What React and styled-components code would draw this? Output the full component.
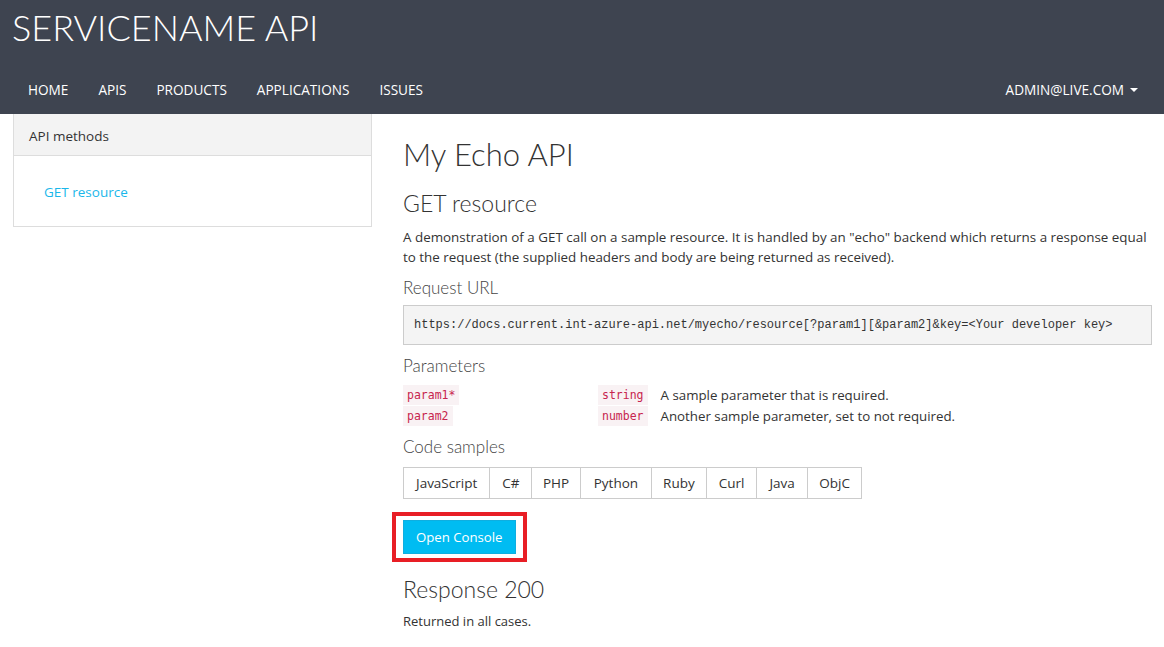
import React from "react";
import styled, { createGlobalStyle } from "styled-components";

const GlobalStyle = createGlobalStyle`
  body {
    margin: 0;
    background: #fff;
    font-family: "Open Sans", "Noto Sans", sans-serif;
    color: #333;
  }
`;

const lightFont = `"Lato", "Open Sans", sans-serif`;

const Header = styled.header`
  background-color: #3e4450;
  color: #fff;
`;

const Brand = styled.div`
  padding: 0 12px;
  height: 65px;
  font-family: ${lightFont};
  font-size: 36px;
  font-weight: 300;
  line-height: 54px;
`;

const NavBar = styled.nav`
  display: flex;
  justify-content: space-between;
  align-items: center;
  height: 49px;
  padding: 0 13px;
`;

const NavList = styled.div`
  display: flex;
`;

const NavItem = styled.a`
  padding: 0 15px;
  font-size: 13.6px;
  color: #fff;
  text-transform: uppercase;
  text-decoration: none;
`;

const UserMenu = styled(NavItem)`
  display: flex;
  align-items: center;
  gap: 6px;
  padding-right: 13px;
  &::after {
    content: "";
    border-left: 4px solid transparent;
    border-right: 4px solid transparent;
    border-top: 4px solid #fff;
  }
`;

const Page = styled.div`
  display: grid;
  grid-template-columns: 359px 1fr;
  gap: 31px;
  padding: 0 12px 0 13px;
`;

const Panel = styled.aside`
  align-self: start;
  border: 1px solid #ddd;
  border-top: none;
`;

const PanelHeading = styled.div`
  background: #f3f3f3;
  border-bottom: 1px solid #ddd;
  padding: 3px 15px 0;
  height: 38px;
  line-height: 38px;
  font-size: 13.5px;
  color: #333;
`;

const PanelBody = styled.div`
  padding: 24px 30px 24px;
`;

const MethodLink = styled.a`
  color: #1ab7ea;
  font-size: 13.5px;
  text-decoration: none;
  line-height: 20px;
`;

const Main = styled.main`
  padding-top: 18px;
`;

const Title = styled.h1`
  margin: 0 0 11px;
  font-family: ${lightFont};
  font-size: 31px;
  font-weight: 300;
  line-height: 44px;
  color: #333;
`;

const OpTitle = styled.h2`
  margin: 0 0 8px;
  font-family: ${lightFont};
  font-size: 23px;
  font-weight: 300;
  line-height: 32px;
  color: #333;
`;

const SubTitle = styled.h3`
  margin: 0 0 4px;
  font-family: ${lightFont};
  font-size: 17px;
  font-weight: 300;
  line-height: 26px;
  color: #444;
`;

const Text = styled.p`
  margin: 0 0 8px;
  font-size: ${(p) => p.size || 13.4}px;
  line-height: 20px;
  color: #333;
`;

const UrlBox = styled.pre`
  margin: 0 0 8px;
  padding: 11px 10px;
  background: #f4f4f4;
  border: 1px solid #ccc;
  font-family: "Liberation Mono", "DejaVu Sans Mono", monospace;
  font-size: 12px;
  line-height: 16px;
  color: #333;
  white-space: pre;
`;

const ParamGrid = styled.div`
  display: grid;
  grid-template-columns: 182px max-content 1fr;
  column-gap: 13px;
  row-gap: 1px;
  align-items: center;
  margin: 6px 0 8px;
`;

const Code = styled.code`
  justify-self: start;
  padding: 1px 4px;
  background: #f9f2f4;
  color: #c7254e;
  font-family: "DejaVu Sans Mono", "Liberation Mono", monospace;
  font-size: 11.5px;
  line-height: 18px;
`;

const ParamDesc = styled.span`
  font-size: 13.3px;
  color: #333;
  line-height: 20px;
`;

const Tabs = styled.div`
  display: flex;
  margin: 7px 0 13px;
`;

const Tab = styled.div`
  padding: 0 ${(p) => p.pad || 12}px;
  height: 30px;
  line-height: 30px;
  border: 1px solid #ccc;
  margin-left: -1px;
  font-size: 13.5px;
  color: #333;
  &:first-child {
    margin-left: 0;
  }
`;

const Highlight = styled.div`
  display: inline-block;
  margin-left: -11px;
  padding: 4px 7px;
  border: 4px solid #e81e25;
`;

const ConsoleButton = styled.button`
  display: block;
  height: 34px;
  padding: 0 12px;
  background: #00bcf2;
  border: 1px solid #0faee0;
  color: #fff;
  font-family: "Open Sans", "Noto Sans", sans-serif;
  font-size: 13.2px;
`;

const ResponseTitle = styled(OpTitle)`
  margin-top: 11px;
  margin-bottom: 6px;
`;

const tabs = [
  ["JavaScript", 12],
  ["C#", 12],
  ["PHP", 10.5],
  ["Python", 13],
  ["Ruby", 11],
  ["Curl", 12],
  ["Java", 12],
  ["ObjC", 11.5],
];

const params = [
  ["param1*", "string", "A sample parameter that is required."],
  ["param2", "number", "Another sample parameter, set to not required."],
];

export default function App() {
  return (
    <>
      <GlobalStyle />
      <Header>
        <Brand>SERVICENAME API</Brand>
        <NavBar>
          <NavList>
            <NavItem>Home</NavItem>
            <NavItem>APIs</NavItem>
            <NavItem>Products</NavItem>
            <NavItem>Applications</NavItem>
            <NavItem>Issues</NavItem>
          </NavList>
          <UserMenu>admin@live.com</UserMenu>
        </NavBar>
      </Header>
      <Page>
        <Panel>
          <PanelHeading>API methods</PanelHeading>
          <PanelBody>
            <MethodLink>GET resource</MethodLink>
          </PanelBody>
        </Panel>
        <Main>
          <Title>My Echo API</Title>
          <OpTitle>GET resource</OpTitle>
          <Text>
            A demonstration of a GET call on a sample resource. It is handled by an "echo" backend which
            returns a response equal to the request (the supplied headers and body are being returned as
            received).
          </Text>
          <SubTitle>Request URL</SubTitle>
          <UrlBox>
            https://docs.current.int-azure-api.net/myecho/resource[?param1][&amp;param2]&amp;key=&lt;Your developer key&gt;
          </UrlBox>
          <SubTitle>Parameters</SubTitle>
          <ParamGrid>
            {params.map(([name, type, desc]) => (
              <React.Fragment key={name}>
                <Code>{name}</Code>
                <Code>{type}</Code>
                <ParamDesc>{desc}</ParamDesc>
              </React.Fragment>
            ))}
          </ParamGrid>
          <SubTitle>Code samples</SubTitle>
          <Tabs>
            {tabs.map(([t, pad]) => (
              <Tab key={t} pad={pad}>
                {t}
              </Tab>
            ))}
          </Tabs>
          <Highlight>
            <ConsoleButton>Open Console</ConsoleButton>
          </Highlight>
          <ResponseTitle>Response 200</ResponseTitle>
          <Text size={13}>Returned in all cases.</Text>
        </Main>
      </Page>
    </>
  );
}
